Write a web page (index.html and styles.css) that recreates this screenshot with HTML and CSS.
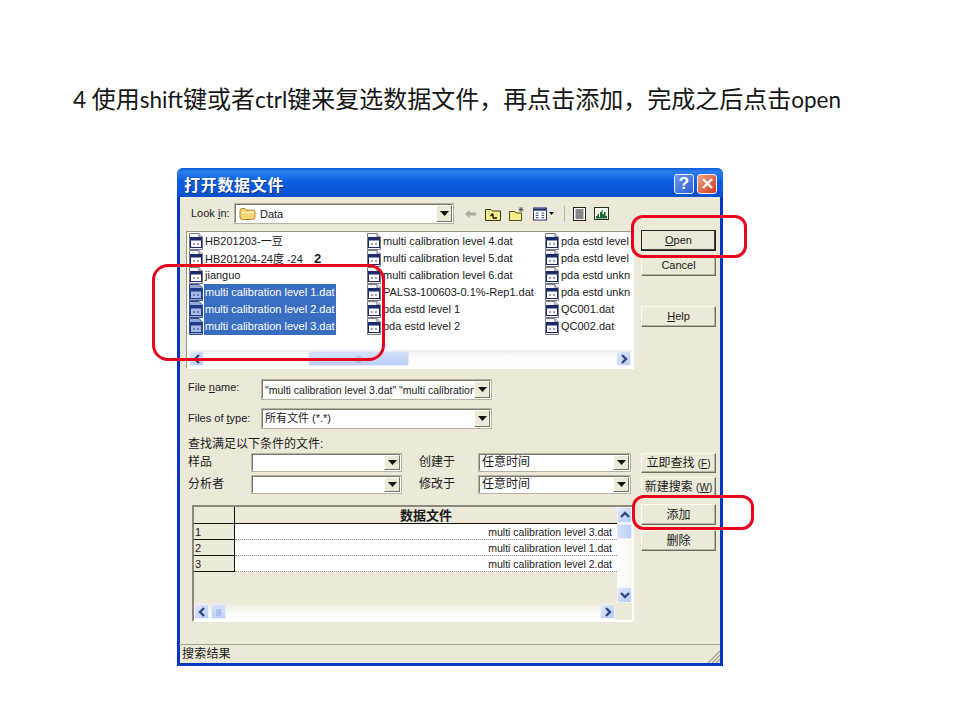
FILE: index.html
```html
<!DOCTYPE html>
<html lang="zh">
<head>
<meta charset="utf-8">
<title>打开数据文件</title>
<link rel="stylesheet" href="styles.css">
</head>
<body>
<svg class="defs" width="0" height="0" aria-hidden="true">
  <symbol id="doc" viewBox="0 0 14 17">
    <path d="M.5.5H10L13.5 4V16.5H.5Z" fill="#f4f4f6" stroke="#777a84"/>
    <path d="M10 .5V4H13.5" fill="#dfe3ea" stroke="#777a84"/>
    <rect x="1.500" y="4.500" width="11" height="10" fill="#fff" stroke="#1c2a6b"/>
    <rect x="2" y="5" width="10" height="2.500" fill="#1c2a6b"/>
    <path d="M4 11H6M8 11H10" stroke="#34406f"/>
  </symbol>
  <symbol id="docsel" viewBox="0 0 14 17">
    <path d="M.5.5H10L13.500 4V16.500H.5Z" fill="#8ea7d6" stroke="#3a4f88"/>
    <rect x="1.500" y="4.500" width="11" height="10" fill="#a9bde4" stroke="#1f3a86"/>
    <rect x="2" y="5" width="10" height="2.500" fill="#1f3a86"/>
    <path d="M4 11H6M8 11H10" stroke="#1f3a86"/>
  </symbol>
  <symbol id="tri" viewBox="0 0 9 5"><path d="M0 0H9L4.500 5Z" fill="#111"/></symbol>
  <symbol id="left" viewBox="0 0 10 10"><path d="M7 1L3 5L7 9" fill="none" stroke="#33477f" stroke-width="2.400"/></symbol>
  <symbol id="right" viewBox="0 0 10 10"><path d="M3 1L7 5L3 9" fill="none" stroke="#33477f" stroke-width="2.400"/></symbol>
  <symbol id="up" viewBox="0 0 10 10"><path d="M1 7L5 3L9 7" fill="none" stroke="#33477f" stroke-width="2.400"/></symbol>
  <symbol id="down" viewBox="0 0 10 10"><path d="M1 3L5 7L9 3" fill="none" stroke="#33477f" stroke-width="2.400"/></symbol>
</svg>

<main class="slide">
  <h1 class="heading"><span class="latin">4 </span>使用<span class="latin">shift</span>键或者<span class="latin">ctrl</span>键来复选数据文件&#xFF0C;再点击添加&#xFF0C;完成之后点击<span class="latin">open</span></h1>

  <section class="dialog">
    <header class="titlebar">
      <span class="title">打开数据文件</span>
      <span class="capbtn help">?</span>
      <span class="capbtn close">
        <svg width="13" height="13" viewBox="0 0 13 13"><path d="M2 2L11 11M11 2L2 11" stroke="#fff" stroke-width="2.400"/></svg>
      </span>
    </header>

    <div class="content">
      <div class="leftcol">
        <div class="lookin">
          <span class="lookin-label">Look <u>i</u>n:</span>
          <div class="combo lookin-combo">
            <svg class="folder" width="17" height="14" viewBox="0 0 17 14"><path d="M1 3.500Q1 1.500 3 1.500H6L7.500 3H14Q16 3 16 5V10Q16 12.500 13 12.500H4Q1 12.500 1 10Z" fill="#f7d774" stroke="#a98a3a"/><path d="M2 5.500H15" stroke="#fff3c0"/></svg>
            <span class="combo-text low">Data</span>
            <span class="combo-btn"><svg width="9" height="5"><use href="#tri"/></svg></span>
          </div>
          <div class="tools">
            <svg class="tool" width="13" height="12" viewBox="0 0 14 12"><path d="M1 6L6 1.500V4.500H13V7.500H6V10.500Z" fill="#a9a99c"/></svg>
            <svg class="tool" width="16" height="14" viewBox="0 0 16 14"><path d="M.5 2.500H6L7.500 4H15.500V13.500H.5Z" fill="#f3ec8a" stroke="#3c3a14"/><path d="M8 11V7M5.500 9L8 6.500M8 11H12" fill="none" stroke="#111" stroke-width="1.300"/></svg>
            <svg class="tool" width="16" height="15" viewBox="0 0 16 15"><path d="M.5 5.500H6L7 7H12.500V14.500H.5Z" fill="#f3ec8a" stroke="#55521e"/><path d="M12 1V6M9.500 3.500H14.500M10 1.500L14 5.500M14 1.500L10 5.500" stroke="#444" stroke-width=".8"/></svg>
            <span class="viewtool">
              <svg width="14" height="14" viewBox="0 0 15 14"><rect x=".5" y=".5" width="14" height="13" fill="#fff" stroke="#26346e"/><rect x="1" y="1" width="13" height="2.500" fill="#26346e"/><path d="M3 6H6M9 6H12M3 8.500H6M9 8.500H12M3 11H6M9 11H12" stroke="#26346e"/></svg>
              <svg width="5" height="3"><use href="#tri"/></svg>
            </span>
            <span class="toolsep"></span>
            <svg class="tool" width="13" height="14" viewBox="0 0 13 14"><rect x=".5" y=".5" width="12" height="13" fill="#fff" stroke="#222"/><path d="M2.500 3H10.500M2.500 5H10.500M2.500 7H10.500M2.500 9H10.500M2.500 11H10.500" stroke="#111"/></svg>
            <svg class="tool" width="15" height="13" viewBox="0 0 15 13"><rect x=".5" y=".5" width="14" height="12" fill="#f4f7f0" stroke="#24331f"/><path d="M2 11.500V9H3.500V7H5V10H6V5H7.500V3H8.500V7H10V5H11.500V9H13V11.500Z" fill="#1b6b2d"/></svg>
          </div>
        </div>

        <div class="filelist">
          <div class="files">
            <div class="file"><svg class="fileicon"><use href="#doc"/></svg><span>HB201203-一豆</span></div>
            <div class="file"><svg class="fileicon"><use href="#doc"/></svg><span>HB201204-24度 -24 <b class="big2">2</b></span></div>
            <div class="file"><svg class="fileicon"><use href="#doc"/></svg><span>jianguo</span></div>
            <div class="file sel"><svg class="fileicon"><use href="#docsel"/></svg><span>multi calibration level 1.dat</span></div>
            <div class="file sel"><svg class="fileicon"><use href="#docsel"/></svg><span>multi calibration level 2.dat</span></div>
            <div class="file sel"><svg class="fileicon"><use href="#docsel"/></svg><span>multi calibration level 3.dat</span></div>
            <div class="file"><svg class="fileicon"><use href="#doc"/></svg><span>multi calibration level 4.dat</span></div>
            <div class="file"><svg class="fileicon"><use href="#doc"/></svg><span>multi calibration level 5.dat</span></div>
            <div class="file"><svg class="fileicon"><use href="#doc"/></svg><span>multi calibration level 6.dat</span></div>
            <div class="file"><svg class="fileicon"><use href="#doc"/></svg><span>PALS3-100603-0.1%-Rep1.dat</span></div>
            <div class="file"><svg class="fileicon"><use href="#doc"/></svg><span>pda estd level 1</span></div>
            <div class="file"><svg class="fileicon"><use href="#doc"/></svg><span>pda estd level 2</span></div>
            <div class="file"><svg class="fileicon"><use href="#doc"/></svg><span>pda estd level 3</span></div>
            <div class="file"><svg class="fileicon"><use href="#doc"/></svg><span>pda estd level 4</span></div>
            <div class="file"><svg class="fileicon"><use href="#doc"/></svg><span>pda estd unknown 1</span></div>
            <div class="file"><svg class="fileicon"><use href="#doc"/></svg><span>pda estd unknown 2</span></div>
            <div class="file"><svg class="fileicon"><use href="#doc"/></svg><span>QC001.dat</span></div>
            <div class="file"><svg class="fileicon"><use href="#doc"/></svg><span>QC002.dat</span></div>
          </div>
          <div class="hbar list-hbar">
            <span class="sbtn"><svg width="10" height="10"><use href="#left"/></svg></span>
            <span class="list-thumb"><span class="grip">||||</span></span>
            <span class="sbtn"><svg width="10" height="10"><use href="#right"/></svg></span>
          </div>
        </div>

        <div class="fieldrow first">
          <span class="fieldlabel">File <u>n</u>ame:</span>
          <div class="combo wide"><span class="combo-text clip low narrow">"multi calibration level 3.dat" "multi calibration level 1.dat"</span><span class="combo-btn"><svg width="9" height="5"><use href="#tri"/></svg></span></div>
        </div>
        <div class="fieldrow second">
          <span class="fieldlabel">Files of <u>t</u>ype:</span>
          <div class="combo wide"><span class="combo-text">所有文件 (*.*)</span><span class="combo-btn"><svg width="9" height="5"><use href="#tri"/></svg></span></div>
        </div>

        <div class="cond-title">查找满足以下条件的文件:</div>
        <div class="condrow">
          <span class="condlabel">样品</span>
          <div class="combo cond"><span class="combo-text"></span><span class="combo-btn"><svg width="9" height="5"><use href="#tri"/></svg></span></div>
          <span class="condlabel2">创建于</span>
          <div class="combo cond2"><span class="combo-text">任意时间</span><span class="combo-btn"><svg width="9" height="5"><use href="#tri"/></svg></span></div>
        </div>
        <div class="condrow next">
          <span class="condlabel">分析者</span>
          <div class="combo cond"><span class="combo-text"></span><span class="combo-btn"><svg width="9" height="5"><use href="#tri"/></svg></span></div>
          <span class="condlabel2">修改于</span>
          <div class="combo cond2"><span class="combo-text">任意时间</span><span class="combo-btn"><svg width="9" height="5"><use href="#tri"/></svg></span></div>
        </div>

        <div class="gridframe">
          <div class="gridtop">
            <div class="gridbody">
              <div class="gridrow headrow"><span class="rowhead"></span><span class="colhead">数据文件</span></div>
              <div class="gridrow"><span class="rowhead">1</span><span class="cell">multi calibration level 3.dat</span></div>
              <div class="gridrow"><span class="rowhead">2</span><span class="cell">multi calibration level 1.dat</span></div>
              <div class="gridrow"><span class="rowhead">3</span><span class="cell">multi calibration level 2.dat</span></div>
            </div>
            <div class="vbar">
              <span class="sbtn vbtn"><svg width="10" height="10"><use href="#up"/></svg></span>
              <span class="vthumb"></span>
              <span class="vspace"></span>
              <span class="sbtn vbtn"><svg width="10" height="10"><use href="#down"/></svg></span>
            </div>
          </div>
          <div class="hbar grid-hbar">
            <span class="sbtn"><svg width="10" height="10"><use href="#left"/></svg></span>
            <span class="grid-thumb"><span class="grip">||||</span></span>
            <span class="hspace"></span>
            <span class="sbtn"><svg width="10" height="10"><use href="#right"/></svg></span>
          </div>
        </div>
      </div>

      <div class="rightcol">
        <button class="btn default b-open"><u>O</u>pen</button>
        <button class="btn b-cancel">Cancel</button>
        <button class="btn b-help"><u>H</u>elp</button>
        <button class="btn b-find">立即查找 <span class="acc">(<u>F</u>)</span></button>
        <button class="btn b-new">新建搜索 <span class="acc">(<u>W</u>)</span></button>
        <button class="btn b-add">添加</button>
        <button class="btn b-del">删除</button>
      </div>
    </div>

    <footer class="status">
      <span>搜索结果</span>
      <svg class="sizegrip" width="13" height="13" viewBox="0 0 13 13"><path d="M13 1L1 13M13 5L5 13M13 9L9 13" stroke="#a5a294" stroke-width="1.300"/></svg>
    </footer>
  </section>

  <div class="mark mark-files"></div>
  <div class="mark mark-open"></div>
  <div class="mark mark-add"></div>
</main>
</body>
</html>
```

FILE: styles.css
```css
* { box-sizing: border-box; }
html, body { margin: 0; padding: 0; background: #fff; }
body { width: 960px; height: 720px; overflow: hidden; }
.defs { position: absolute; }

.slide { position: relative; width: 960px; height: 720px; padding-top: 83px; }
.heading {
  margin: 0 0 55px 73px;
  height: 30px;
  font: 400 24px/30px "Noto Sans CJK SC", sans-serif;
  color: #161616;
  white-space: nowrap;
}
.latin { font: 400 22.5px/30px Lato, sans-serif; }

/* dialog window */
.dialog {
  width: 546px;
  height: 498px;
  margin-left: 177px;
  display: flex;
  flex-direction: column;
  background: #ece9d8;
  border: solid #0437c4;
  border-width: 0 3px 3px;
  border-radius: 6px 6px 0 0;
  font: 11px/1.2 "Liberation Sans", "Noto Sans CJK SC", sans-serif;
  color: #1a1a1a;
}
.titlebar {
  margin: 0 -3px;
  height: 29px;
  flex: none;
  display: flex;
  align-items: center;
  padding: 2px 6px 0 7px;
  border-radius: 6px 6px 0 0;
  background: linear-gradient(#0a5ad8 0, #2b7fec 12%, #0d5fe0 45%, #0a55d8 80%, #0c50c8 100%);
}
.title {
  flex: 1;
  font: 700 16px/1 "Noto Sans CJK SC", sans-serif;
  letter-spacing: .7px;
  color: #fff;
  text-shadow: 1px 1px 0 #123a90;
}
.capbtn {
  width: 20px;
  height: 20px;
  margin-left: 3px;
  border: 1px solid #e8eefc;
  border-radius: 3px;
  display: flex;
  align-items: center;
  justify-content: center;
}
.help { background: linear-gradient(135deg, #6d97f2, #2c5fd8); color: #fff; font: 700 17px/1 "Liberation Sans", sans-serif; }
.close { background: linear-gradient(135deg, #f0a080, #d43a1c); }

.content { flex: 1; display: flex; padding-left: 6px; min-height: 0; }
.leftcol { width: 448px; flex: none; }
.rightcol { width: 75px; margin-left: 7px; display: flex; flex-direction: column; flex: none; }

/* look in */
.lookin { display: flex; align-items: center; margin-top: 6px; height: 21px; padding-left: 5px; }
.lookin-label { width: 43px; flex: none; }
.lookin-combo { width: 220px; height: 21px; flex: none; }
.folder { flex: none; margin: 0 3px 0 2px; }
.tools { display: flex; align-items: center; margin-left: 10px; }
.tool { flex: none; margin-right: 8px; }
.viewtool { display: flex; align-items: center; gap: 2px; margin: 0 10px 0 0; }
.toolsep { width: 1px; height: 16px; background: #b8b5a4; margin-right: 8px; }

/* combos */
.combo {
  display: flex;
  align-items: center;
  background: #fff;
  border: 2px solid;
  border-color: #7c7a6c #fff #fff #7c7a6c;
  outline: 1px solid #b5b2a2;
  outline-offset: -1px;
  padding-left: 1px;
}
.combo-text { flex: 1; min-width: 0; white-space: nowrap; padding-left: 1px; }
.low { padding-top: 2px; }
.clip { overflow: hidden; }
.narrow { font-size: 10.5px; }
.combo-btn {
  width: 16px;
  height: 100%;
  flex: none;
  display: flex;
  align-items: center;
  justify-content: center;
  background: #ece9d8;
  border: 1px solid;
  border-color: #fff #77756a #77756a #fff;
}
.combo-btn svg { display: block; }

/* file list */
.filelist {
  margin-top: 7px;
  height: 138px;
  display: flex;
  flex-direction: column;
  background: #fff;
  border: 1px solid;
  border-color: #9a9888 #fff #fff #9a9888;
  padding: 1px 1px 1px 2px;
}
.files {
  flex: 1;
  min-height: 0;
  display: grid;
  grid-auto-flow: column;
  grid-template-rows: repeat(6, 17px);
  grid-template-columns: 178px 178px 85px;
  overflow: hidden;
}
.file { display: flex; align-items: center; white-space: nowrap; overflow: hidden; min-width: 0; gap: 2px; }
.fileicon { width: 14px; height: 17px; flex: none; }
.file.sel span { background: #3a6ec0; color: #fff; margin-left: -1px; padding: 0 1px; height: 17px; line-height: 17px; width: 132px; }
.big2 { font-size: 13px; margin-left: 8px; }

/* scrollbars */
.hbar { display: flex; align-items: center; flex: none; }
.list-hbar {
  height: 17px;
  background: linear-gradient(#eef0f0, #fdfdfc 40%, #fff);
}
.sbtn {
  width: 15px;
  height: 15px;
  flex: none;
  display: flex;
  align-items: center;
  justify-content: center;
  background: linear-gradient(135deg, #dfe8fb, #b7cbf6);
  border: 1px solid #eef2fb;
  border-radius: 2px;
}
.list-thumb {
  margin-left: 104px;
  width: 101px;
  height: 15px;
  margin-right: 207px;
  display: flex;
  align-items: center;
  justify-content: center;
  background: linear-gradient(#d5e1fb, #bccff8);
  border: 1px solid #e5ecfb;
  border-radius: 2px;
}
.grip { color: #93a7d2; font-size: 7px; letter-spacing: -.5px; line-height: 1; }

/* field rows */
.fieldrow { display: flex; align-items: center; padding-left: 2px; height: 21px; }
.fieldrow.first { margin-top: 10px; }
.fieldrow.second { margin-top: 8px; }
.fieldlabel { width: 73px; flex: none; }
.fieldrow.first .fieldlabel { padding-bottom: 4px; }
.wide { width: 231px; height: 21px; }

.cond-title { margin: 8px 0 0 2px; height: 16px; font-size: 12px; line-height: 14px; }
.condrow { display: flex; align-items: center; height: 19px; padding-left: 2px; }
.condrow.next { margin-top: 3px; }
.condlabel { width: 63px; flex: none; font-size: 12px; }
.condlabel2 { width: 59px; flex: none; margin-left: 17px; font-size: 12px; }
.cond { width: 151px; height: 19px; flex: none; }
.cond2 { width: 153px; height: 19px; flex: none; }
.cond2 .combo-text { font-size: 12px; }

/* data grid */
.gridframe {
  margin: 11px 0 0 6px;
  width: 442px;
  height: 117px;
  background: #ece9d8;
  border: 2px solid;
  border-color: #8a8878 #fff #fff #8a8878;
  display: flex;
  flex-direction: column;
}
.gridtop { flex: 1; display: flex; min-height: 0; }
.gridbody { width: 423px; flex: none; }
.gridrow { display: flex; height: 16px; }
.headrow { height: 17px; }
.rowhead {
  width: 41px;
  flex: none;
  padding: 1px 0 0 1px;
  border-right: 1px solid #111;
  border-bottom: 1px solid #111;
  font: 11px/14px "Liberation Sans", sans-serif;
}
.colhead {
  flex: 1;
  text-align: center;
  font: 700 13px/16px "Noto Sans CJK SC", sans-serif;
  border-bottom: 1px solid #111;
}
.cell {
  flex: 1;
  background: #fff;
  text-align: right;
  padding: 1px 5px 0 0;
  line-height: 14px;
  font-size: 10.5px;
  border-bottom: 1px dotted #8a8a8a;
}
.vbar {
  width: 15px;
  flex: none;
  display: flex;
  flex-direction: column;
  background: linear-gradient(90deg, #ffffff, #f8f7f0);
}
.vbtn { height: 16px; }
.vthumb {
  height: 15px;
  margin-top: 1px;
  background: linear-gradient(90deg, #d5e1fb, #bccff8);
  border: 1px solid #e5ecfb;
  border-radius: 2px;
}
.vspace { flex: 1; }
.grid-hbar {
  height: 17px;
  width: 421px;
  background: linear-gradient(#ece9d8, #fdfdfb 60%, #fff);
}
.grid-thumb {
  margin-left: 2px;
  width: 15px;
  height: 15px;
  display: flex;
  align-items: center;
  justify-content: center;
  background: linear-gradient(#d5e1fb, #bccff8);
  border: 1px solid #e5ecfb;
  border-radius: 2px;
}
.hspace { flex: 1; }

/* buttons */
.btn {
  width: 75px;
  height: 21px;
  padding: 0;
  flex: none;
  background: #ece9d8;
  border: 1px solid;
  border-color: #fbfaf5 #6f6d60 #6f6d60 #fbfaf5;
  box-shadow: inset -1px -1px 0 #b3b09e;
  font: 11px/1 "Liberation Sans", "Noto Sans CJK SC", sans-serif;
  color: #1a1a1a;
}
.default { border-color: #222; box-shadow: inset -1px -1px 0 #444; }
.b-open { margin-top: 33px; }
.b-cancel { margin-top: 4px; }
.b-help { margin-top: 30px; }
.b-find { margin-top: 126px; height: 20px; font-size: 12px; }
.b-new { margin-top: 4px; height: 20px; font-size: 12px; }
.b-add { margin-top: 7px; font-size: 12px; }
.b-del { margin-top: 5px; font-size: 12px; }
.acc { font-size: 10px; }

/* status */
.status {
  height: 19px;
  flex: none;
  display: flex;
  align-items: center;
  justify-content: space-between;
  margin-left: -1px;
  padding-left: 3px;
  border-top: 1px solid #a8a595;
  font-size: 12px;
  letter-spacing: .2px;
}
.sizegrip { align-self: flex-end; }

/* red annotations */
.mark { position: absolute; border: 3px solid #e8001c; border-radius: 12px; pointer-events: none; }
.mark-files { left: 152px; top: 264px; width: 233px; height: 97px; border-radius: 16px; }
.mark-open { left: 631px; top: 215px; width: 116px; height: 43px; }
.mark-add { left: 632px; top: 495px; width: 122px; height: 35px; }
```
